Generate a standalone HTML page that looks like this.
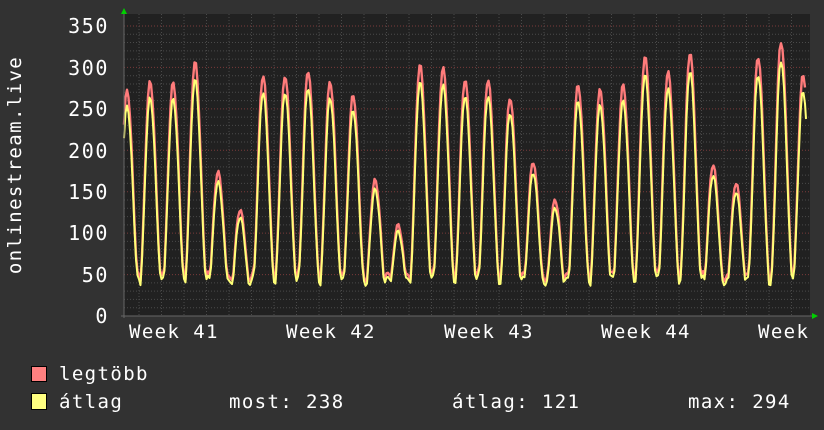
<!DOCTYPE html>
<html><head><meta charset="utf-8"><style>
html,body{margin:0;padding:0;background:#323232;}
svg{display:block}
text{font-family:"DejaVu Sans Mono","Liberation Mono",monospace;fill:#fff;font-size:19px;letter-spacing:1.4px}
.yl{font-size:20px;letter-spacing:1.6px}
</style></head><body>
<svg id="g" width="824" height="430" viewBox="0 0 824 430" xmlns="http://www.w3.org/2000/svg">
<rect width="824" height="430" fill="#323232"/>
<rect x="124" y="14" width="686" height="302" fill="#212121"/>
<g id="grid"></g>
<path id="mx" fill="none" stroke="#ff7b7b" stroke-width="2.4" stroke-linejoin="round"/>
<path id="av" fill="none" stroke="#ffff77" stroke-width="2" stroke-linejoin="round"/>
<line x1="124" y1="14" x2="124" y2="318" stroke="#666"/>
<line x1="121" y1="316" x2="812" y2="316" stroke="#666"/>
<polygon points="121,14 127,14 124,8" fill="#00d000"/>
<polygon points="812,313 812,319 818,316" fill="#00d000"/>
<g text-anchor="end" class="yl">
<text class="yl" x="109" y="33">350</text><text class="yl" x="109" y="75">300</text><text class="yl" x="109" y="116">250</text>
<text class="yl" x="109" y="158">200</text><text class="yl" x="109" y="199">150</text><text class="yl" x="109" y="240">100</text>
<text class="yl" x="109" y="282">50</text><text class="yl" x="109" y="323">0</text>
</g>
<text transform="translate(21,165) rotate(-90)" text-anchor="middle">onlinestream.live</text>
<text x="129" y="338">Week 41</text><text x="286" y="338">Week 42</text><text x="444" y="338">Week 43</text>
<text x="601" y="338">Week 44</text><text x="758" y="338">Week</text>
<rect x="31.5" y="366.5" width="15" height="15" fill="#ff8080" stroke="#000"/>
<rect x="31.5" y="393.5" width="15" height="16" fill="#ffff80" stroke="#000"/>
<text x="59" y="380">legtöbb</text>
<text x="59" y="408">átlag</text>
<text x="229" y="408">most: 238</text>
<text x="452" y="408">átlag: 121</text>
<text x="688" y="408">max: 294</text>
</svg>
<script>
var g=document.getElementById("grid"),h="";
for(var v=10;v<=350;v+=10){var y=316-v*0.8286;var maj=v%50==0;
h+='<line x1="124" x2="810" y1="'+y+'" y2="'+y+'" stroke="'+(maj?'#7a3a3a':'#4a4a4a')+'" stroke-dasharray="1,2"/>';}
for(var x=139;x<810;x+=22.5){var maj=Math.abs(((x-252)%157.5+157.5)%157.5)<2;
h+='<line y1="14" y2="316" x1="'+x+'" x2="'+x+'" stroke="'+(maj?'#7a3a3a':'#4a4a4a')+'" stroke-dasharray="1,2"/>';}
g.innerHTML=h;
var pk=[[127,91],[150,82],[173,83],[195,62],[218,172],[240,210],[263,76],[285,76],[308,71],[330,82],[353,95],[375,180],[398,225],[420,65],[443,68],[465,80],[488,80],[510,98],[533,162],[555,200],[578,85],[600,90],[623,85],[645,57],[668,72],[690,53],[713,165],[736,183],[758,57],[781,42],[803,75]];
function val(x,isMax){var best=0;for(var i=0;i<pk.length;i++){var d=(x-pk[i][0]);var p=(316-pk[i][1])/0.8286;if(!isMax)p*=0.93;
var w=d<0?7:8;var f=Math.exp(-Math.pow(Math.abs(d)/w,2.2));best=Math.max(best,p*f);}
var base=(isMax?48:43)+5*Math.sin(x*0.7);return Math.max(best,base);}
function path(isMax){var s="";for(var x=124;x<=806;x+=1.5){var y=316-val(x,isMax)*0.8286+(Math.sin(x*3.1)*1.5);s+=(s?"L":"M")+x.toFixed(1)+","+y.toFixed(1);}return s;}
document.getElementById("mx").setAttribute("d",path(true));
document.getElementById("av").setAttribute("d",path(false)+"L806,119");
</script>
</body></html>
